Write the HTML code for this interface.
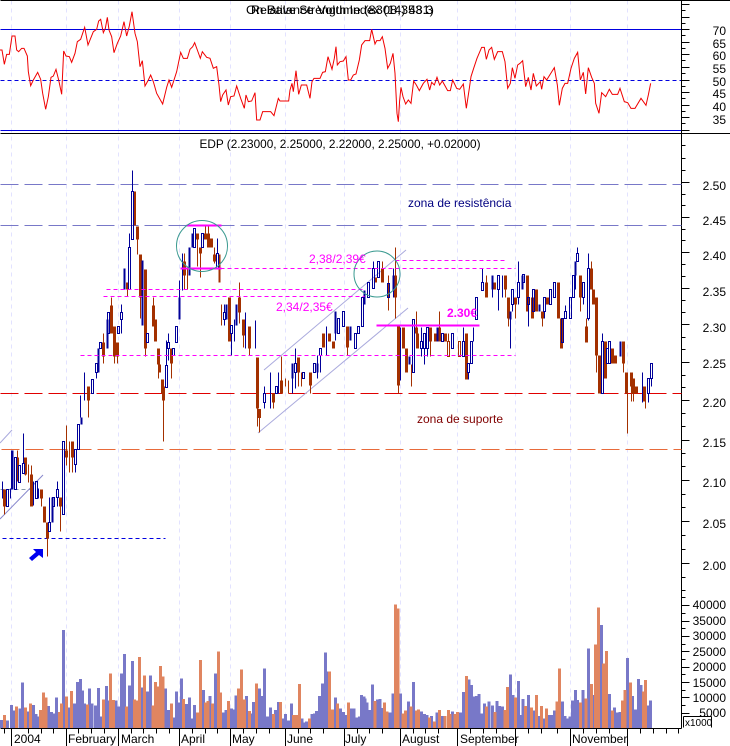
<!DOCTYPE html>
<html><head><meta charset="utf-8"><title>EDP</title>
<style>html,body{margin:0;padding:0;background:#fff}svg{display:block}text{font-family:"Liberation Sans",Arial,sans-serif;font-size:12px}</style></head>
<body>
<svg width="730" height="746" viewBox="0 0 730 746" xmlns="http://www.w3.org/2000/svg">
<rect width="730" height="746" fill="#fff"/>
<g transform="translate(.5,.5)" fill="none" shape-rendering="crispEdges">
<path stroke="#e2e2ff" stroke-dasharray="4 4" d="M11 0V728M66 0V728M118 0V728M179 0V728M230 0V728M285 0V728M344 0V728M400 0V728M457 0V728M515 0V728M570 0V728M627 0V728"/>
<path stroke="#0000e0" d="M0 29H681M0 130H681"/>
<path stroke="#0000e0" stroke-dasharray="4 3" d="M0 80H681"/>
<path stroke="#000" d="M0 0H730M0 133H730M681 0V728M0 728H681"/>
<path stroke="#7878c8" stroke-dasharray="18 6" d="M0 184H681M0 225H681"/>
<path stroke="#e00000" stroke-dasharray="18 6" d="M0 393H681"/>
<path stroke="#e86a3a" stroke-dasharray="18 6" d="M1 449H681"/>
<path stroke="#0000e0" stroke-dasharray="4 3" d="M2 538H165"/>
<path stroke="#8899aa" stroke-dasharray="4 3" d="M0 489H35"/>
</g>
<g fill="none" stroke="#aaaadd">
<path d="M264 370L406 250M258 433L408 308M0 443L12 430"/>
<path stroke="#8888cc" d="M0 519L43 475"/>
</g>
<g transform="translate(.5,.5)" fill="none" shape-rendering="crispEdges">
<path stroke="#a33000" d="M4 506V514M17 450V481M25 474V475M28 464V482M31 465V474M41 498V506M47 538V556M60 506V531M66 425V465M69 441V472M72 457V472M88 400V417M103 333V363M111 297V305M114 356V363M117 356V363M127 289V296M137 239V254M140 297V318M145 348V356M153 297V305M158 364V378M163 400V441M171 363V378M184 253V289M187 268V289M197 239V266M200 253V277M205 226V233M208 226V233M214 247V263M221 304V325M239 282V323M243 335V347M249 348V355M257 408V426M259 409V432M273 402V408M281 356V380M285 378V386M288 380V393M298 372V386M301 372V386M310 385V393M347 347V355M382 261V268M388 275V310M395 247V318M398 385V393M411 364V386M416 311V327M439 311V327M448 333V341M430 341V356M486 275V282M505 289V297M508 318V326M515 304V318M542 318V326M580 297V311M586 318V326M591 261V268M596 355V372M623 363V372M627 380V433M631 386V401M633 393V401M645 400V408M258 409h2v8h-2zM447 341h2v15h-2zM458 341h2v15h-2z"/>
<path stroke="#a33000" stroke-width="3" d="M4 489V506M17 457V474M25 457V474M31 474V506M41 489V498M44 506V522M47 522V538M60 497V506M66 450V457M72 441V457M88 386V400M103 342V356M111 305V333M114 326V356M117 342V356M127 282V289M134 191V225M137 226V239M140 254V297M145 269V348M153 305V326M155 319V341M158 348V364M159 364V372M162 379V393M163 386V400M171 348V363M184 261V275M197 233V239M200 247V253M205 233V239M208 233V247M211 238V247M214 254V261M229 297V341M239 297V312M243 319V335M249 326V348M257 357V408M273 393V402M281 380V393M298 357V372M310 372V385M323 333V347M329 333V341M333 341V348M347 326V347M375 277V282M382 268V282M395 275V297M398 326V385M403 327V348M406 348V372M416 327V333M417 333V348M430 327V341M435 333V341M439 327V341M445 333V341M466 333V379M486 282V297M494 282V289M505 275V289M508 297V318M515 297V304M527 275V311M532 297V318M536 289V311M542 311V318M547 297V304M558 282V318M561 318V348M580 275V297M586 326V342M591 268V289M593 289V304M596 297V355M599 355V393M605 341V378M612 348V363M615 355V363M623 341V363M626 372V393M631 372V386M633 378V393M636 386V393M644 386V401"/>
<path stroke="#a33000" stroke-width="2" d="M219 254V282"/>
<path stroke="#000099" d="M6 489h2v17h-2zM14 457h2v32h-2zM18 465h2v17h-2zM22 463h2v10h-2zM23 433V463M35 481h2v17h-2zM48 522h2v9h-2zM49 497V522M52 497h2v9h-2zM56 489h2v8h-2zM57 481V489M57 497V506M62 441h2v73h-2zM74 449h2v15h-2zM75 464V472M77 424h2v25h-2zM91 379h2v14h-2zM95 363h2v9h-2zM96 372V378M99 342h2v6h-2zM107 312h2v21h-2zM117 326h2v7h-2zM120 312h2v7h-2zM121 304V312M121 319V333M128 247h2v42h-2zM129 233V247M131 191h2v48h-2zM132 170V191M146 333h2v9h-2zM165 365h2v22h-2zM166 340V365M167 342h2v6h-2zM168 333V342M168 348V360M172 348h2v7h-2zM175 326h2v16h-2zM193 228h2v19h-2zM201 233h2v14h-2zM216 253h2v15h-2zM217 238V253M223 312h2v7h-2zM224 304V312M224 319V325M230 325h2v8h-2zM231 333V355M263 393h2v9h-2zM264 386V393M264 402V408M275 386h2v7h-2zM294 363h2v9h-2zM295 348V363M295 372V388M302 372h2v6h-2zM313 363h2v9h-2zM319 348h2v7h-2zM320 355V372M337 318h2v15h-2zM342 311h2v15h-2zM354 333h2v15h-2zM357 326h2v7h-2zM361 297h2v29h-2zM367 282h2v15h-2zM372 268h2v20h-2zM373 261V268M377 261h2v16h-2zM387 283h2v14h-2zM400 327V380M412 319h2v53h-2zM420 341h2v7h-2zM421 327V341M421 348V356M423 333h2v15h-2zM424 348V364M426 327h2v21h-2zM427 348V356M441 333h2v8h-2zM451 333h2v15h-2zM462 341h2v15h-2zM463 327V341M467 363h2v9h-2zM468 372V379M470 341h2v22h-2zM473 327V341M475 297h2v22h-2zM481 282h2v8h-2zM482 268V282M497 275h2v14h-2zM498 289V310M511 289h2v15h-2zM512 304V311M517 282h2v15h-2zM518 261V282M518 297V304M522 274h2v8h-2zM527 297h2v7h-2zM528 304V326M532 289h2v22h-2zM543 297h2v14h-2zM544 311V318M549 289h2v15h-2zM553 282h2v15h-2zM561 318h2v24h-2zM564 311h2v7h-2zM565 305V311M569 297h2v21h-2zM572 275h2v22h-2zM576 253h2v8h-2zM577 247V253M582 282h2v15h-2zM583 297V304M587 268h2v50h-2zM588 253V268M588 318V320M601 341h2v52h-2zM602 333V341M606 348h2v15h-2zM608 341h2v22h-2zM647 378h2v15h-2zM648 393V402M650 363h2v15h-2zM651 378V386M2 481V498M10 488V498M33 481V505M38 488V498M84 372V400M80 395V417M245 312V348M255 320V348M270 372V408M278 372V393M326 326V355M502 275V297M182 253V290M234 319V341M179 280V297M11 450V489M292 378V393M317 355V378M335 333V340M393 268V297M492 289V297M510 319V348M575 275V289M642 372V393M642 393V402"/>
<path stroke="#000099" stroke-width="2" d="M12 450V489M52 497V522M81 417V424M98 348V372M107 319V348M124 268V289M142 260V325M179 297V319M189 247V275M192 233V247M226 304V319M236 304V325M292 363V378M317 363V372M335 311V333M350 326V340M364 290V304M393 275V290M409 356V364M437 327V341M492 275V289M510 311V319M522 275V289M539 304V311M575 261V275M620 341V356"/>
<path stroke="#ff00ff" stroke-dasharray="4 3" d="M395 260H504M220 268H515M106 289H365M103 296H364M80 355H515"/>
<path stroke="#ff00ff" stroke-width="2" d="M186 225H221M180 268H221M376 325H479"/>
</g>
<circle cx="202" cy="246" r="25.5" fill="none" stroke="#3a9a90"/>
<circle cx="377" cy="274" r="23" fill="none" stroke="#3a9a90"/>
<polygon points="43,549 33,549 36,552 29,558 32,561 39,555 43,558" fill="#0000f0"/>
<g transform="scale(.33333)" fill="none" stroke="#f00000" stroke-width="3" stroke-linejoin="miter">
<polyline points="0,150 6,150 13,193 20,163 28,163 36,108 45,108 50,150 56,155 65,145 72,145 82,168 85,215 92,257 100,240 113,217 122,238 128,280 137,328 145,290 153,232 160,228 168,208 176,240 185,283 191,153 198,168 208,170 215,187 225,160 232,125 242,118 254,82 264,135 272,115 280,95 290,88 296,63 302,58 310,98 316,85 322,52 327,90 335,110 342,158 352,130 362,108 372,65 380,108 388,78 396,35 405,100 412,125 420,200 427,182 435,258 445,240 452,225 460,245 470,280 488,312 500,262 507,240 515,262 530,215 542,157 550,175 562,175 570,148 578,140 584,128 592,150 601,175 607,155 620,172 630,175 640,205 650,200 657,255 662,305 668,285 678,270 685,315 692,290 702,288 710,258 722,295 733,325 738,285 745,305 755,303 765,278 770,360 780,360 788,335 812,335 822,347 835,295 840,303 866,303 870,270 876,250 880,275 888,212 896,283 904,255 920,255 930,295 936,245 942,235 960,235 968,217 976,215 984,170 996,208 1003,175 1008,140 1012,195 1020,185 1030,183 1038,170 1045,240 1052,240 1060,225 1068,222 1078,180 1085,135 1095,122 1109,122 1115,88 1125,132 1130,122 1140,122 1147,110 1155,145 1163,205 1171,190 1179,160 1185,220 1191,340 1195,365 1199,300 1203,262 1209,290 1217,312 1225,300 1233,310 1241,243 1249,255 1258,272 1270,250 1281,238 1289,270 1295,247 1303,255 1311,232 1319,255 1327,243 1343,272 1351,272 1358,240 1370,265 1379,268 1390,252 1399,325 1408,265 1413,230 1421,205 1431,175 1445,142 1453,142 1459,178 1467,150 1475,142 1483,178 1493,155 1507,155 1515,185 1523,265 1531,250 1537,203 1545,235 1553,195 1560,190 1568,182 1577,260 1585,232 1593,270 1600,220 1609,258 1621,245 1625,268 1632,230 1640,240 1663,203 1672,255 1678,316 1687,265 1695,250 1703,250 1713,205 1723,175 1733,157 1741,240 1750,217 1757,282 1765,203 1775,232 1783,250 1787,310 1797,340 1805,278 1817,290 1828,268 1837,283 1853,283 1860,265 1873,305 1883,308 1893,325 1905,325 1923,295 1938,316 1945,285 1952,250"/>
</g>
<g transform="translate(0,590) scale(.33333)" fill="none" stroke-width="9" shape-rendering="crispEdges">
<path stroke="#7878c8" d="M4 414V390M13 414V392M22 414V392M34 414V345M42 414V362M60 414V355M68 414V278M84 414V365M100 414V345M108 414V372M114 414V380M146 414V348M154 414V366M162 414V370M170 414V322M191 414V120M207 414V352M224 414V340M232 414V276M241 414V267M248 414V302M254 414V340M268 414V295M276 414V340M286 414V346M295 414V294M303 414V380M319 414V288M325 414V332M348 414V332M356 414V350M364 414V250M373 414V192M388 414V286M397 414V213M426 414V293M442 414V305M451 414V256M497 414V296M505 414V360M521 414V382M529 414V305M537 414V338M544 414V266M559 414V342M568 414V323M577 414V386M584 414V345M610 414V300M630 414V318M647 414V250M670 414V367M678 414V360M694 414V356M702 414V358M708 414V316M740 414V318M752 414V370M760 414V336M778 414V295M786 414V318M793 414V235M802 414V380M811 414V352M827 414V360M835 414V336M850 414V386M857 414V372M866 414V392M874 414V340M906 414V385M914 414V398M920 414V395M936 414V372M944 414V370M950 414V363M958 414V318M967 414V280M976 414V188M981 414V245M1006 414V323M1022 414V355M1030 414V366M1038 414V375M1054 414V356M1062 414V356M1070 414V382M1078 414V380M1084 414V315M1092 414V320M1095 414V325M1101 414V338M1109 414V360M1117 414V283M1133 414V328M1140 414V327M1145 414V354M1170 414V367M1179 414V310M1202 414V310M1225 414V335M1241 414V276M1265 414V365M1273 414V372M1281 414V375M1295 414V378M1311 414V368M1326 414V378M1358 414V365M1382 414V368M1391 414V306M1407 414V268M1415 414V285M1423 414V320M1429 414V318M1437 414V312M1445 414V370M1453 414V340M1467 414V334M1477 414V346M1491 414V333M1499 414V348M1507 414V350M1531 414V253M1539 414V315M1555 414V273M1563 414V375M1569 414V327M1585 414V315M1601 414V362M1617 414V378M1631 414V385M1648 414V375M1655 414V375M1663 414V362M1687 414V335M1695 414V378M1703 414V385M1710 414V380M1717 414V332M1727 414V300M1733 414V330M1749 414V300M1765 414V175M1781 414V315M1804 414V105M1828 414V312M1844 414V352M1853 414V368M1860 414V366M1882 414V204M1898 414V318M1906 414V358M1915 414V267M1923 414V285M1945 414V346M1952 414V331"/>
<path stroke="#e08560" d="M13 414V375M50 414V350M76 414V352M92 414V340M122 414V360M131 414V307M138 414V322M178 414V366M184 414V340M199 414V320M215 414V303M262 414V343M310 414V328M332 414V250M340 414V330M380 414V350M404 414V328M412 414V332M419 414V201M434 414V256M459 414V346M466 414V276M474 414V290M482 414V228M489 414V260M514 414V340M550 414V327M592 414V367M602 414V210M616 414V338M624 414V333M638 414V340M656 414V185M662 414V308M686 414V333M716 414V295M724 414V238M733 414V328M748 414V363M769 414V280M820 414V372M842 414V336M881 414V375M889 414V375M898 414V282M928 414V385M988 414V245M997 414V358M1012 414V340M1046 414V338M1125 414V333M1153 414V338M1161 414V365M1186 414V43M1194 414V55M1209 414V370M1217 414V362M1233 414V350M1249 414V362M1256 414V358M1288 414V382M1303 414V395M1318 414V360M1335 414V378M1345 414V360M1350 414V372M1365 414V372M1373 414V366M1399 414V258M1459 414V350M1485 414V366M1515 414V360M1523 414V291M1546 414V323M1577 414V348M1594 414V353M1609 414V315M1625 414V348M1640 414V355M1671 414V334M1679 414V235M1741 414V338M1758 414V325M1774 414V282M1787 414V163M1795 414V52M1811 414V220M1819 414V183M1837 414V362M1867 414V332M1875 414V300M1891 414V278M1931 414V305M1937 414V270"/>
</g>
<g transform="translate(.5,.5)" fill="none" stroke="#000" shape-rendering="crispEdges">
<path d="M681 4h8M681 10h4M681 17h8M681 23h4M681 29h8M681 35h4M681 42h8M681 48h4M681 54h8M681 60h4M681 67h8M681 73h4M681 80h8M681 86h4M681 92h8M681 98h4M681 105h8M681 111h4M681 117h8M681 123h4M681 130h8"/>
<path d="M681 145h4M681 158h4M681 170h4M681 182h8M681 194h4M681 205h4M681 217h8M681 229h4M681 240h4M681 252h8M681 264h4M681 276h4M681 288h8M681 300h4M681 312h4M681 324h8M681 337h4M681 349h4M681 362h8M681 375h4M681 387h4M681 400h8M681 413h4M681 426h4M681 440h8M681 453h4M681 466h4M681 480h8M681 494h4M681 507h4M681 521h8M681 535h4M681 549h4M681 563h8M681 577h4M681 590h4"/>
<path d="M681 597h4M681 605h8M681 613h4M681 621h8M681 628h4M681 636h8M681 644h4M681 651h8M681 659h4M681 667h8M681 674h4M681 682h8M681 690h4M681 697h8M681 705h4M681 713h8"/>
<path d="M683 716V727M711 716V727M683 716H711"/>
<path d="M11 728V746M66 728V746M118 728V746M179 728V746M230 728V746M285 728V746M344 728V746M400 728V746M457 728V746M515 728V746M570 728V746M627 728V746"/>
<path d="M4 728v5M28 728v5M41 728v5M53 728v5M78 728v5M91 728v5M104 728v5M131 728v5M143 728v5M156 728v5M169 728v5M192 728v5M205 728v5M217 728v5M243 728v5M256 728v5M269 728v5M298 728v5M310 728v5M323 728v5M357 728v5M369 728v5M382 728v5M413 728v5M425 728v5M438 728v5M470 728v5M483 728v5M496 728v5M528 728v5M541 728v5M557 728v5M583 728v5M596 728v5M609 728v5M640 728v5M653 728v5M666 728v5M678 728v5"/>
</g>
<g fill="#000">
<text x="340" y="14" text-anchor="middle" textLength="188" lengthAdjust="spacingAndGlyphs">On Balance Volume (8308,3531)</text>
<text x="342" y="14" text-anchor="middle" textLength="182" lengthAdjust="spacingAndGlyphs">Relative Strength Index (14) 48.3</text>
<text x="340" y="148" text-anchor="middle" textLength="281" lengthAdjust="spacingAndGlyphs">EDP (2.23000, 2.25000, 2.22000, 2.25000, +0.02000)</text>
<g text-anchor="end">
<text x="726" y="35">70</text><text x="726" y="48">65</text><text x="726" y="60">60</text><text x="726" y="73">55</text><text x="726" y="86">50</text><text x="726" y="98">45</text><text x="726" y="111">40</text><text x="726" y="124">35</text>
<text x="726" y="190">2.50</text><text x="726" y="225">2.45</text><text x="726" y="260">2.40</text><text x="726" y="296">2.35</text><text x="726" y="332">2.30</text><text x="726" y="368">2.25</text><text x="726" y="407">2.20</text><text x="726" y="447">2.15</text><text x="726" y="487">2.10</text><text x="726" y="528">2.05</text><text x="726" y="570">2.00</text>
<text x="726" y="609">40000</text><text x="726" y="625">35000</text><text x="726" y="640">30000</text><text x="726" y="656">25000</text><text x="726" y="671">20000</text><text x="726" y="687">15000</text><text x="726" y="702">10000</text><text x="726" y="717">5000</text>
</g>
<text x="685" y="726" style="font-size:10px">x1000</text>
<text x="14" y="743">2004</text><text x="68" y="743">February</text><text x="121" y="743">March</text><text x="181" y="743">April</text><text x="232" y="743">May</text><text x="287" y="743">June</text><text x="345" y="743">July</text><text x="402" y="743">August</text><text x="460" y="743">September</text><text x="572" y="743">November</text>
</g>
<text x="408" y="207" fill="#000080">zona de resistência</text>
<text x="417" y="423" fill="#800000">zona de suporte</text>
<text x="309" y="263" fill="#ff00ff">2,38/2,39€</text>
<text x="276" y="311" fill="#ff00ff">2,34/2,35€</text>
<text x="447" y="317" fill="#ff00ff" font-weight="bold">2.30€</text>
</svg>
</body></html>
